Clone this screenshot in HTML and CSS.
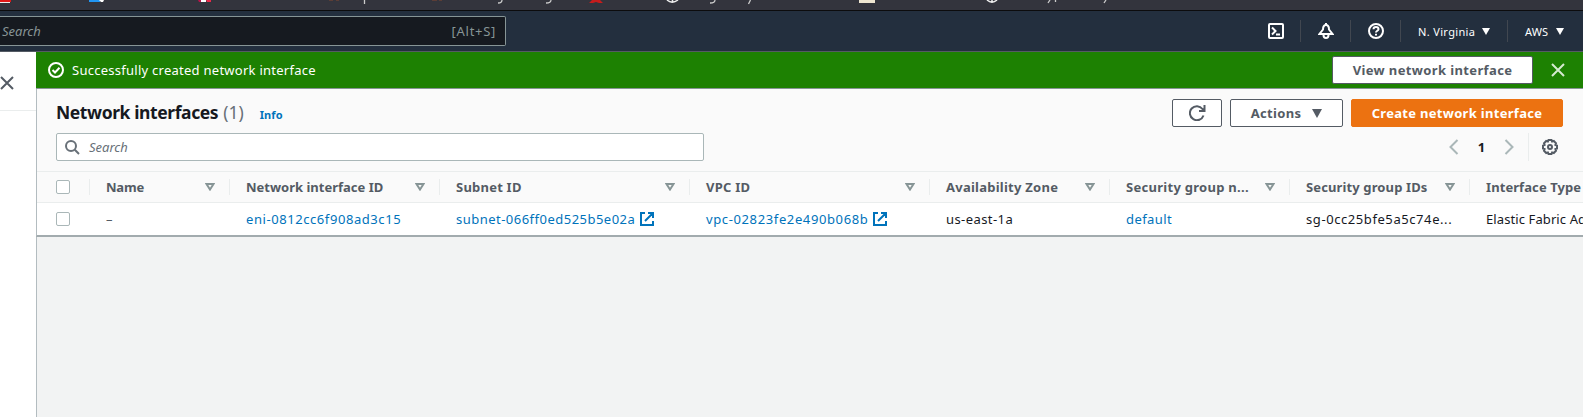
FILE: index.html
```html
<!DOCTYPE html>
<html lang="en">
<head>
<meta charset="utf-8">
<title>Network interfaces</title>
<link rel="stylesheet" href="styles.css">
</head>
<body>
<div class="bookmarks"><svg width="1583" height="10">
  <path fill="#e01818" d="M0 0h11v2H0z"/><path fill="#eee" d="M0 2h10v1H0z"/>
  <path fill="#2196f3" d="M89 0h11v2H89z"/><path fill="#fff" d="M99 0h5l-1 2h-2z"/>
  <path fill="#b91349" d="M198 0h3v2h-2z"/><path fill="#fff" d="M201 0h5v2h-5z"/><path fill="#e92949" d="M206 0h5v2h-4z"/>
  <path fill="#5b3d36" d="M329 0h4v1h-4zM336 0h3v1h-3zM432 0h5v1h-5zM439 0h3v1h-3z"/>
  <path fill="none" stroke="#ccc" stroke-width="1.300" d="M364.500 0v4M502 0q0 3-4 3M551 0q0 3-5 3M715 0q0 3-5 3M750.500 0l-2 4M1050 0l-2 3M1055.500 0v2M1106 0l-2 3"/>
  <path fill="#c51c1c" d="M589 3l3-3h8l3 3h-4l-3-1-3 1z"/>
  <path fill="none" stroke="#eee" stroke-width="1.500" d="M667 0q5 4.500 11 0M672.500 0v2M987 0q5 4.500 10 0M992 0v2"/>
  <path fill="#eee6d1" d="M859 0h16v3h-16z"/>
</svg></div>
<header class="nav">
  <div class="nav-search"><i class="t-navsearch">Search</i><span class="t-alt">[Alt+S]</span></div>
  <div class="nav-tools">
    <div class="tool"><svg width="16" height="16" viewBox="0 0 16 16" class="ico white"><rect x="1" y="1" width="14" height="14" rx="1"/><path d="M4 4.500L7.500 8 4 11.500M8 11.500h4"/></svg></div>
    <div class="tool"><svg width="16" height="16" viewBox="0 0 16 16" class="ico white"><path d="M8 2C5.500 2 5 4 5 6.500L1.500 11h13L11 6.500C11 4 10.500 2 8 2zM8 0v2M5.500 12c0 4 5 4 5 0"/></svg></div>
    <div class="tool"><svg width="16" height="16" viewBox="0 0 16 16" class="ico white"><circle cx="8" cy="8" r="7"/><path d="M5.500 6.200c0-3 5-3 5 0C10.500 7.800 8 7.800 8 9.600M8 10.800v1.700"/></svg></div>
    <div class="tool region"><span class="t-region">N. Virginia</span><svg width="8" height="7"><path fill="#fff" d="M0 0h8L4 7z"/></svg></div>
    <div class="tool account"><span class="t-aws">AWS</span><svg width="8" height="7"><path fill="#fff" d="M0 0h8L4 7z"/></svg></div>
  </div>
</header>
<div class="layout">
  <aside class="side"><div class="side-head"><svg width="14" height="14" viewBox="0 0 14 14" class="ico grey"><path d="M1 1l12 12M13 1L1 13"/></svg></div></aside>
  <main class="main">
    <div class="flash">
      <svg width="16" height="16" viewBox="0 0 16 16" class="ico white"><circle cx="8" cy="8" r="7"/><path d="M4.500 8l2.500 2.500L11.500 5.800"/></svg>
      <span class="t-flash">Successfully created network interface</span>
      <button class="btn view"><span class="t-view">View network interface</span></button>
      <svg width="14" height="14" viewBox="0 0 14 14" class="ico pale"><path d="M1 1l12 12M13 1L1 13"/></svg>
    </div>
    <section class="panel">
      <div class="title-row">
        <h1 class="t-title">Network interfaces</h1><span class="count">(1)</span><a class="info">Info</a>
        <div class="actions">
          <button class="btn refresh"><svg width="17" height="16" viewBox="0 0 17 16" class="ico grey"><path d="M14.500 10.500A7 7 0 1 1 13.500 4L15 5.500M15.500 0v6H10"/></svg></button>
          <button class="btn act"><span class="t-act">Actions</span><svg width="10" height="9"><path fill="#545b64" d="M0 0h10L5 9z"/></svg></button>
          <button class="btn create"><span class="t-create">Create network interface</span></button>
        </div>
      </div>
      <div class="filter-row">
        <div class="filter"><svg width="15" height="15" viewBox="0 0 15 15" class="ico slate"><circle cx="6" cy="6" r="5"/><path d="M9.800 9.800L14 14"/></svg><i class="t-filter">Search</i></div>
        <div class="pager">
          <svg width="10" height="16" viewBox="0 0 10 16" class="ico light"><path d="M8.500 1L1.500 8l7 7"/></svg>
          <b>1</b>
          <svg width="10" height="16" viewBox="0 0 10 16" class="ico light"><path d="M1.500 1l7 7-7 7"/></svg>
        </div>
        <div class="prefs"><svg width="16" height="16" viewBox="0 0 16 16" class="ico grey"><path d="M6.500 1h3l.6 1.600 1.700-.6 2.200 2.200-.6 1.700 1.600.6v3l-1.600.6.6 1.700-2.200 2.200-1.700-.6-.6 1.600h-3l-.6-1.600-1.700.6L2 11.800l.6-1.700L1 9.500v-3l1.600-.6L2 4.200 4.200 2l1.700.6z"/><circle cx="8" cy="8" r="2"/></svg></div>
      </div>
      <div class="grid head">
        <div class="cell sel"><span class="box"></span></div>
        <div class="cell"><span class="h-name">Name</span><svg class="sort" width="10" height="8"><path d="M1.500 1h7L5 6.500z"/></svg></div>
        <div class="cell"><span class="h-eni">Network interface ID</span><svg class="sort" width="10" height="8"><path d="M1.500 1h7L5 6.500z"/></svg></div>
        <div class="cell"><span class="h-sub">Subnet ID</span><svg class="sort" width="10" height="8"><path d="M1.500 1h7L5 6.500z"/></svg></div>
        <div class="cell"><span class="h-vpc">VPC ID</span><svg class="sort" width="10" height="8"><path d="M1.500 1h7L5 6.500z"/></svg></div>
        <div class="cell"><span class="h-az">Availability Zone</span><svg class="sort" width="10" height="8"><path d="M1.500 1h7L5 6.500z"/></svg></div>
        <div class="cell"><span class="h-sgn">Security group n...</span><svg class="sort" width="10" height="8"><path d="M1.500 1h7L5 6.500z"/></svg></div>
        <div class="cell"><span class="h-sgi">Security group IDs</span><svg class="sort" width="10" height="8"><path d="M1.500 1h7L5 6.500z"/></svg></div>
        <div class="cell"><span class="h-type">Interface Type</span></div>
      </div>
      <div class="grid row">
        <div class="cell sel"><span class="box"></span></div>
        <div class="cell"><span class="dash">–</span></div>
        <div class="cell"><a class="r-eni">eni-0812cc6f908ad3c15</a></div>
        <div class="cell"><a class="r-sub">subnet-066ff0ed525b5e02a</a><svg class="ico ext" width="14" height="14" viewBox="0 0 14 14"><path d="M5 1H1v12h12V9M8 1h5v5M13 1L5 9"/></svg></div>
        <div class="cell"><a class="r-vpc">vpc-02823fe2e490b068b</a><svg class="ico ext" width="14" height="14" viewBox="0 0 14 14"><path d="M5 1H1v12h12V9M8 1h5v5M13 1L5 9"/></svg></div>
        <div class="cell"><span class="r-az">us-east-1a</span></div>
        <div class="cell"><a class="r-def">default</a></div>
        <div class="cell"><span class="r-sg">sg-0cc25bfe5a5c74e...</span></div>
        <div class="cell"><span class="r-type">Elastic Fabric Adapter</span></div>
      </div>
    </section>
    <div class="rest"></div>
  </main>
</div>
</body>
</html>
```
FILE: styles.css
```css
* { box-sizing: border-box; }
body { margin: 0; width: 1583px; height: 417px; overflow: hidden; background: #f2f3f3; font: 13px/20px "Noto Sans", "Open Sans", sans-serif; color: #16191f; }
svg { display: block; flex: none; }
span, a, i, b, h1 { white-space: nowrap; }
.ico { fill: none; stroke-width: 2; }
.white { stroke: #fff; }
.pale { stroke: #d5ead0; }
.grey { stroke: #545b64; }
.slate { stroke: #687078; }
.light { stroke: #aab7b8; }
.ext { stroke: #0073bb; margin-left: 5px; }
.bookmarks { height: 11px; background: #33343d; border-bottom: 1px solid #0c0c0d; }
.nav { height: 41px; background: #232f3e; border-bottom: 1px solid #545b64; display: flex; justify-content: space-between; align-items: flex-start; }
.nav-search { width: 506px; height: 30px; margin-top: 5px; padding: 0 9px 0 2px; display: flex; align-items: center; justify-content: space-between; background: #161a20; border: 1px solid #879596; border-left: 0; border-radius: 0 2px 2px 0; color: #879596; }
.t-alt { letter-spacing: .7px; }
.nav-tools { display: flex; margin-top: 9px; }
.tool { height: 22px; width: 50px; display: flex; align-items: center; justify-content: center; border-right: 1px solid #414750; color: #fff; font-size: 11px; }
.t-region { letter-spacing: .35px; padding-top: 2px; }
.t-aws { padding-top: 2px; letter-spacing: .1px; }
.region { width: 107px; justify-content: flex-start; padding-left: 17px; }
.account { width: 75px; border: 0; justify-content: flex-start; padding-left: 17px; }
.region svg { margin-left: auto; margin-right: 17px; }
.account svg { margin-left: auto; margin-right: 19px; }
.layout { display: flex; height: 365px; }
.side { width: 36px; background: #fff; }
.side-head { height: 59px; border-bottom: 1px solid #eaeded; padding-top: 24px; }
.main { width: 1547px; display: flex; flex-direction: column; }
.rest { flex: 1; border-left: 1px solid #b3bcc0; }
.flash { height: 37px; background: #1d8102; border-bottom: 1px solid #879596; display: flex; align-items: center; padding: 0 18px 0 12px; color: #fff; }
.t-flash { margin-left: 8px; letter-spacing: .26px; }
.btn { height: 28px; display: flex; align-items: center; justify-content: center; background: #fff; border: 1px solid #545b64; border-radius: 2px; color: #545b64; font: bold 13px/20px "Noto Sans", "Open Sans", sans-serif; padding: 0; flex: none; }
.view { width: 201px; margin-left: auto; margin-right: 18px; letter-spacing: .37px; }
.panel { background: #fafafa; border-left: 1px solid #b3bcc0; border-bottom: 2px solid #a2abae; }
.title-row { height: 44px; padding: 10px 20px 0 19px; display: flex; }
h1 { margin: 0; font-size: 17.500px; line-height: 26px; letter-spacing: -.4px; }
.count { font-size: 17.500px; line-height: 26px; color: #687078; margin-left: 5px; }
.info { font-weight: bold; font-size: 11px; line-height: 32px; margin-left: 16px; letter-spacing: .1px; }
.info, a { color: #0073bb; }
.actions { display: flex; gap: 8px; margin-left: auto; }
.refresh { width: 50px; }
.act { width: 113px; gap: 11px; letter-spacing: .3px; }
.create { width: 212px; background: #ec7211; border-color: #ec7211; color: #fff; letter-spacing: .3px; }
.filter-row { height: 38px; padding-left: 19px; display: flex; }
.filter { width: 648px; height: 28px; background: #fff; border: 1px solid #aab7b8; border-radius: 2px; padding-left: 8px; display: flex; align-items: center; gap: 9px; color: #687078; }
.pager { margin-left: auto; width: 79px; height: 28px; display: flex; align-items: center; gap: 18.500px; }
.pager b { width: 8px; text-align: center; }
.prefs { width: 55px; height: 28px; border-left: 1px solid #eaeded; padding: 6px 0 0 13px; }
.grid { display: grid; grid-template-columns: 53px 140px 210px 250px 240px 180px 180px 180px 180px; width: 1546px; overflow: hidden; }
.head { height: 32px; border-top: 1px solid #eaeded; border-bottom: 1px solid #eaeded; font-weight: bold; color: #545b64; }
.row { height: 32px; background: #fff; }
.cell { display: flex; align-items: center; padding-left: 16px; }
.sel { padding-left: 19px; }
.head .cell { height: 16px; margin-top: 7px; border-right: 1px solid #eaeded; }
.box { width: 14px; height: 14px; border: 1px solid #aab7b8; border-radius: 2px; background: #fff; }
.sort { margin-left: auto; margin-right: 14px; fill: none; stroke: #879596; stroke-width: 2; }
.h-name { letter-spacing: -.2px; }
.h-sub, .h-vpc { letter-spacing: .22px; }
.h-az { letter-spacing: .25px; }
.h-sgn { letter-spacing: .28px; }
.h-sgi { letter-spacing: .12px; }
.h-type { letter-spacing: .08px; }
.dash { color: #545b64; }
.r-eni { letter-spacing: .57px; }
.r-sub { letter-spacing: .48px; }
.r-vpc { letter-spacing: .62px; }
.r-az, .r-def { letter-spacing: .42px; }
.r-sg { letter-spacing: .58px; }
.r-type { letter-spacing: .1px; }
```
